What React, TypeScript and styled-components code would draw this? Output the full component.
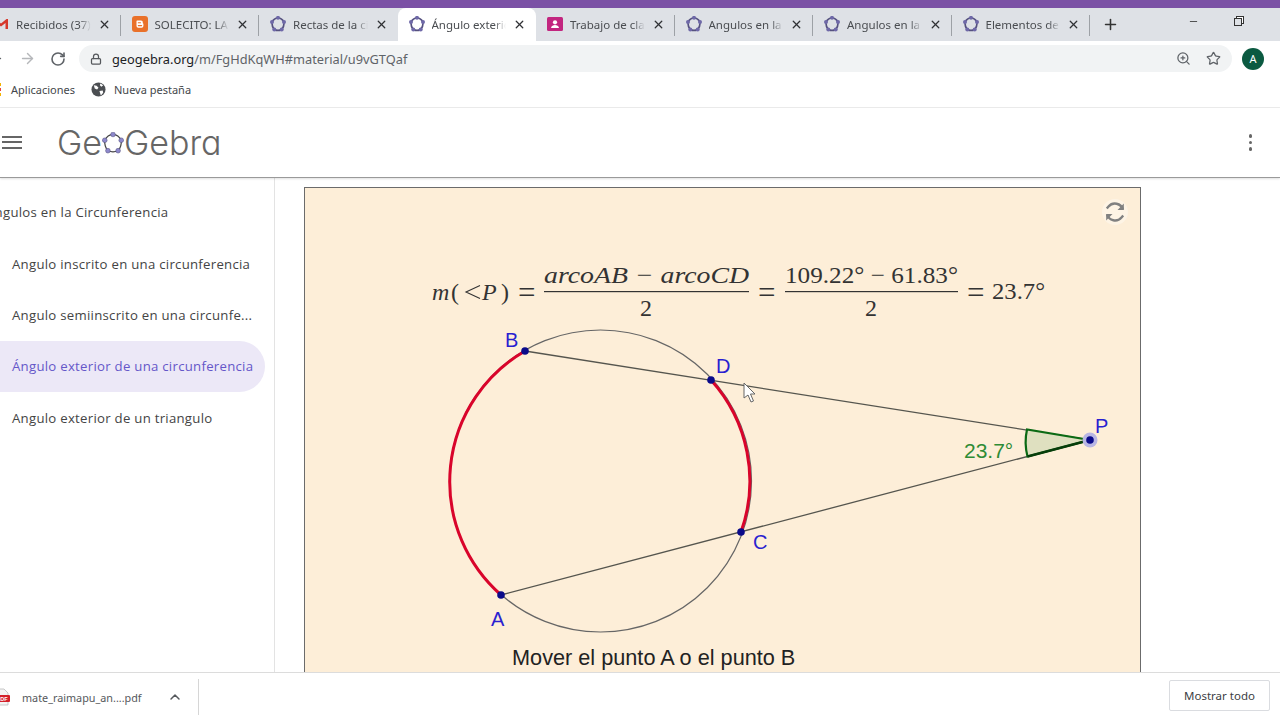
import React from 'react';
import styled, { createGlobalStyle } from 'styled-components';
import { ArrowLeft, ArrowRight, ChevronUp, Lock, Minus, Plus, RotateCw, Star, X, ZoomIn } from 'lucide-react';

const GlobalStyle = createGlobalStyle`
  html, body { margin: 0; padding: 0; background: #fff; overflow: hidden; }
  * { box-sizing: border-box; }
`;

const Page = styled.div`
  width: 1280px;
  height: 720px;
  display: flex;
  flex-direction: column;
  overflow: hidden;
  font-family: 'Noto Sans', 'Liberation Sans', sans-serif;
  color: #3c4043;
`;

const TitleStrip = styled.div`
  height: 8px;
  flex: none;
  background: #7b51a5;
`;

const TabStrip = styled.div`
  height: 33px;
  flex: none;
  display: flex;
  align-items: stretch;
  background: #dee1e6;
`;

const TabList = styled.div`
  display: flex;
  margin-left: -18px;
`;

const Tab = styled.div<{ $active?: boolean; $divider?: boolean }>`
  width: 138.5px;
  display: flex;
  align-items: center;
  gap: 7px;
  padding: 0 10px 1px 11px;
  position: relative;
  background: ${(p) => (p.$active ? '#fff' : 'transparent')};
  border-radius: ${(p) => (p.$active ? '8px 8px 0 0' : '0')};

  &:after {
    content: '';
    display: ${(p) => (p.$divider ? 'block' : 'none')};
    position: absolute;
    right: 0;
    top: 7px;
    bottom: 5px;
    width: 1px;
    background: #9da1a6;
  }
`;

const TabTitle = styled.span`
  flex: 1;
  min-width: 0;
  overflow: hidden;
  white-space: nowrap;
  font-size: 11.5px;
  color: #4a4d51;
  -webkit-mask-image: linear-gradient(to right, #000 84%, transparent 100%);
  mask-image: linear-gradient(to right, #000 84%, transparent 100%);
`;

const TabClose = styled(X)`
  flex: none;
  color: #2f3134;
`;

const NewTab = styled(Plus)`
  align-self: center;
  margin-left: 12px;
  color: #333;
`;

const WindowControls = styled.div`
  margin-left: auto;
  display: flex;
  align-items: center;
  gap: 35.5px;
  padding: 0 38px 6px 0;
  color: #444;
`;

const RestoreIcon = styled.div`
  width: 8px;
  height: 8px;
  border: 1px solid #333;
  position: relative;
  box-shadow: 2px -2px 0 -1px #fff, 2px -2px 0 0 #333;
`;

const Toolbar = styled.div`
  height: 33px;
  flex: none;
  display: flex;
  align-items: center;
  padding: 2px 15px 0 0;
  color: #5f6368;
`;

const NavIcons = styled.div`
  width: 79px;
  flex: none;
  display: flex;
  align-items: center;
  gap: 14.5px;
  margin-left: -13px;
`;

const Omnibox = styled.div`
  width: 1153px;
  height: 27px;
  flex: none;
  display: flex;
  align-items: center;
  background: #f1f3f4;
  border-radius: 14px;
  padding: 0 10px 0 11px;
  margin-left: 13px;
`;

const LockIcon = styled(Lock)`
  flex: none;
  margin-right: 10px;
  color: #55585c;
`;

const Url = styled.div`
  font-size: 12.8px;
  color: #5f6368;
  white-space: nowrap;

  b {
    font-weight: 400;
    color: #202124;
  }
`;

const OmniActions = styled.div`
  margin-left: auto;
  display: flex;
  align-items: center;
  gap: 15px;
  padding-right: 1px;
`;

const Avatar = styled.div`
  width: 22px;
  height: 22px;
  flex: none;
  margin-left: 10px;
  border-radius: 50%;
  background: #0b5a41;
  color: #fff;
  font-size: 11px;
  display: flex;
  align-items: center;
  justify-content: center;
`;

const BookmarkBar = styled.div`
  height: 34px;
  flex: none;
  display: flex;
  align-items: center;
  padding-bottom: 3px;
  border-bottom: 1px solid #ececec;
  font-size: 11px;
  color: #44474b;
`;

const Bookmark = styled.div<{ $gap: number; $offset?: number }>`
  display: flex;
  align-items: center;
  gap: ${(p) => p.$gap}px;
  margin-left: ${(p) => p.$offset ?? 0}px;
  margin-right: 16px;
`;

const AppHeader = styled.header`
  height: 70px;
  flex: none;
  display: flex;
  align-items: center;
  padding: 0 28px 0 2px;
  border-bottom: 1px solid #9a9a9a;
  box-shadow: 0 1px 2px rgba(0, 0, 0, 0.12);
  position: relative;
`;

const Hamburger = styled.div`
  width: 20px;
  height: 13px;
  flex: none;
  border-top: 2.5px solid #666;
  border-bottom: 2.5px solid #666;
  position: relative;

  &:after {
    content: '';
    position: absolute;
    left: 0;
    right: 0;
    top: 2.75px;
    height: 2.5px;
    background: #666;
  }
`;

const Logo = styled.div`
  display: flex;
  align-items: center;
  margin-left: 35px;
  font-family: 'Inter', sans-serif;
  font-weight: 300;
  font-size: 34px;
  font-feature-settings: 'cv11' 1;
  color: #666;
`;

const Kebab = styled.div`
  margin-left: auto;
  display: flex;
  flex-direction: column;
  gap: 3px;

  i {
    width: 3.5px;
    height: 3.5px;
    border-radius: 50%;
    background: #666;
  }
`;

const Main = styled.main`
  flex: 1;
  min-height: 0;
  display: flex;
  overflow: hidden;
`;

const Sidebar = styled.nav`
  width: 275px;
  flex: none;
  border-right: 1px solid #e3e3e3;
  padding: 20px 9px 0 0;
`;

const SidebarTitle = styled.div`
  font-family: 'Open Sans', sans-serif;
  font-size: 13.2px;
  font-weight: 500;
  letter-spacing: 0.27px;
  color: #444;
  height: 29px;
  line-height: 29px;
  margin-left: -14px;
  white-space: nowrap;
  margin-bottom: 11px;
`;

const SideItem = styled.div<{ $active?: boolean }>`
  height: 51.4px;
  display: flex;
  align-items: center;
  padding-left: 12px;
  font-family: 'Open Sans', sans-serif;
  font-size: 13.2px;
  font-weight: 500;
  letter-spacing: 0.27px;
  white-space: nowrap;
  color: ${(p) => (p.$active ? '#6557c9' : '#444')};
  background: ${(p) => (p.$active ? '#ece8f7' : 'transparent')};
  border-radius: 0 26px 26px 0;
`;

const Content = styled.section`
  flex: 1;
  padding: 9px 0 0 29px;
`;

const Applet = styled.div`
  width: 837px;
  height: 600px;
  border: 1px solid #6b6b6b;
  background: #fdeed8;
  position: relative;
`;

const AppletDrawing = styled.svg`
  display: block;
  width: 835px;
  height: 598px;
`;

const ResetButton = styled.div`
  position: absolute;
  top: 11px;
  right: 12px;
  width: 26px;
  height: 26px;
  display: flex;
  align-items: center;
  justify-content: center;
  border-radius: 50%;
  background: rgba(255, 255, 255, 0.35);
`;

const DownloadBar = styled.footer`
  height: 48px;
  flex: none;
  display: flex;
  align-items: center;
  background: #fff;
  border-top: 1px solid #dcdcdc;
  padding-right: 10px;
  position: relative;
`;

const DownloadItem = styled.div`
  width: 205px;
  height: 36px;
  display: flex;
  align-items: center;
  border-right: 1px solid #d6d6d6;
  padding-right: 15px;
  margin-left: -6px;
  margin-right: auto;
  margin-top: 1px;
  font-size: 10.8px;
  color: #55585c;
`;

const FileName = styled.span`
  margin-left: 12px;
  flex: 1;
`;

const ShowAll = styled.button`
  width: 101px;
  height: 31px;
  margin-bottom: 3px;
  background: #fff;
  border: 1px solid #dadce0;
  border-radius: 2px;
  font-family: 'Noto Sans', sans-serif;
  font-size: 11.5px;
  color: #3c4043;
  padding: 0;
`;

function GeoGebraIcon({ size = 16, dots = false }: { size?: number; dots?: boolean }) {
  const pts = [
    [8, 1.8],
    [14, 6],
    [11.7, 13.6],
    [4.3, 13.6],
    [2, 6],
  ];
  return (
    <svg width={size} height={size} viewBox="0 0 16 16" style={{ flex: 'none' }}>
      <path
        d="M8 1.8 Q12 2.2 14 6 Q14.4 10.4 11.7 13.6 Q8 15.2 4.3 13.6 Q1.6 10.4 2 6 Q4 2.2 8 1.8Z"
        fill="none"
        stroke={dots ? '#444' : '#55517f'}
        strokeWidth={dots ? 0.9 : 1.7}
      />
      {pts.map(([x, y], i) => (
        <circle key={i} cx={x} cy={y} r={dots ? 1.7 : 2} fill={dots ? '#8d88cc' : '#6f69a8'} stroke={dots ? '#55517f' : 'none'} strokeWidth="0.4" />
      ))}
    </svg>
  );
}

function GmailIcon() {
  return (
    <svg width="16" height="16" viewBox="0 0 16 16" style={{ flex: 'none' }}>
      <path d="M1 3v10h2.5V7L8 10.5 12.5 7v6H15V3h-1.5L8 7.5 2.5 3z" fill="#d6382c" />
    </svg>
  );
}

function BloggerIcon() {
  return (
    <svg width="16" height="16" viewBox="0 0 16 16" style={{ flex: 'none' }}>
      <rect x="0" y="0" width="16" height="16" rx="3" fill="#e9712a" />
      <path d="M5 4.5h4a1.8 1.8 0 0 1 1.8 2v.6c0 .4.4.5.6.6v2.2A1.8 1.8 0 0 1 9.6 11.7H6.3A1.8 1.8 0 0 1 4.5 9.9V5z" fill="#fff" />
      <path d="M6.3 6.7h2.2M6.3 9.6h3.3" stroke="#e9712a" strokeWidth="1.1" strokeLinecap="round" />
    </svg>
  );
}

function ClassroomIcon() {
  return (
    <svg width="16" height="16" viewBox="0 0 16 16" style={{ flex: 'none' }}>
      <rect x="0" y="1" width="16" height="14" rx="1.5" fill="#c2257f" />
      <circle cx="8" cy="6.3" r="2.1" fill="#fff" />
      <path d="M4 12c.5-2.2 2-3 4-3s3.5.8 4 3z" fill="#fff" />
    </svg>
  );
}

function GlobeIcon() {
  return (
    <svg width="15" height="15" viewBox="0 0 16 16" style={{ flex: 'none' }}>
      <circle cx="8" cy="8" r="7.5" fill="#4b4e52" />
      <path d="M3 3.5l3 .5 2 2-1.5 2L4 7zM9 9.5l3.5-.5.5 2.5-2.5 3zM10 1.5l3 2-2 1.5-1.5-1.5z" fill="#fff" />
    </svg>
  );
}

function AppsIcon() {
  const colors = ['#e8453c', '#f4b400', '#34a853', '#e8453c', '#f4b400', '#f4b400'];
  return (
    <svg width="14" height="14" viewBox="0 0 14 14" style={{ flex: 'none' }}>
      {colors.map((c, i) => (
        <rect key={i} x={i % 2 === 0 ? 0 : 4} y={Math.floor(i / 2) * 5 + 1} width="3" height="3" fill={c} />
      ))}
    </svg>
  );
}

function PdfIcon() {
  return (
    <svg width="16" height="18" viewBox="0 0 16 18" style={{ flex: 'none' }}>
      <path d="M2 1h8l4 4v12H2z" fill="#f4f4f4" stroke="#bbb" strokeWidth="0.8" />
      <rect x="0" y="7" width="16" height="7" rx="1" fill="#d3202a" />
      <text x="8" y="12.6" textAnchor="middle" fontSize="5.5" fontWeight="700" fontFamily="Liberation Sans" fill="#fff">
        PDF
      </text>
    </svg>
  );
}

const tabs = [
  { title: 'Recibidos (37) - alum', icon: <GmailIcon />, divider: true },
  { title: 'SOLECITO: LA CIRCUN', icon: <BloggerIcon />, divider: true },
  { title: 'Rectas de la circunfer', icon: <GeoGebraIcon /> },
  { title: 'Ángulo exterior de una', icon: <GeoGebraIcon />, active: true },
  { title: 'Trabajo de clase: Mat', icon: <ClassroomIcon />, divider: true },
  { title: 'Angulos en la Circunf', icon: <GeoGebraIcon />, divider: true },
  { title: 'Angulos en la Circunf', icon: <GeoGebraIcon />, divider: true },
  { title: 'Elementos de la Circu', icon: <GeoGebraIcon />, divider: true },
];

const lessons = [
  'Angulo inscrito en una circunferencia',
  'Angulo semiinscrito en una circunfe...',
  'Ángulo exterior de una circunferencia',
  'Angulo exterior de un triangulo',
];

const MATH = { fontFamily: "'Liberation Serif', serif", fontSize: 24, fill: '#333' };
const MATH_I = { ...MATH, fontStyle: 'italic' as const };
const EQ = { ...MATH, fontSize: 31 };
const LABEL = { fontFamily: "'Liberation Sans', sans-serif", fontSize: 20, fill: '#2a1fd0' };

// drawing uses page coordinates, the viewBox cuts it to the applet
function Construction() {
  return (
    <AppletDrawing viewBox="305 188 835 598">
      <text x="432" y="300" {...MATH_I}>m</text>
      <text x="451" y="300" {...MATH}>(</text>
      <path d="M480 285.5 L466 292 L480 298.5" fill="none" stroke="#333" strokeWidth="1.1" />
      <text x="482" y="300" {...MATH_I}>P</text>
      <text x="501" y="300" {...MATH}>)</text>
      <text x="518" y="303" {...EQ}>=</text>

      <text x="544" y="283" textLength="205" lengthAdjust="spacingAndGlyphs" {...MATH_I}>arcoAB − arcoCD</text>
      <rect x="544" y="291" width="205" height="1.2" fill="#333" />
      <text x="646" y="316" textAnchor="middle" {...MATH}>2</text>
      <text x="758" y="303" {...EQ}>=</text>
      <text x="785" y="283" textLength="173" lengthAdjust="spacingAndGlyphs" {...MATH}>109.22° − 61.83°</text>
      <rect x="785" y="291" width="173" height="1.2" fill="#333" />
      <text x="871" y="316" textAnchor="middle" {...MATH}>2</text>
      <text x="967" y="303" {...EQ}>=</text>
      <text x="992" y="299" textLength="53" lengthAdjust="spacingAndGlyphs" {...MATH}>23.7°</text>

      <circle cx="600.5" cy="481" r="151" fill="none" stroke="#666" strokeWidth="1.2" />
      <path d="M501 595 A151 151 0 0 1 525 351" fill="none" stroke="#d9042b" strokeWidth="3" />
      <path d="M711 380 A151 151 0 0 1 741 532" fill="none" stroke="#d9042b" strokeWidth="3" />
      <path d="M525 351 L1090 440 M501 595 L1090 440" stroke="#55554e" strokeWidth="1.3" />

      <path d="M1090 440 L1027 429.5 Q1024 443 1027.5 456.5 Z" fill="#dfe0c0" />
      <path d="M1090 440 L1027 429.5 Q1024 443 1027.5 456.5 Z" fill="none" stroke="#0b6a14" strokeWidth="2.2" />
      <path d="M1090 440 L1027.5 456.5" stroke="#063d0a" strokeWidth="2.5" />
      <text x="964" y="458" fontFamily="'Liberation Sans', sans-serif" fontSize="21" fill="#2e8b35">23.7°</text>

      <circle cx="1090" cy="440" r="7.5" fill="#b9b6e4" />
      <circle cx="1090" cy="440" r="3.8" fill="#0a0a8a" />
      <circle cx="525" cy="351" r="3.8" fill="#0a0a8a" />
      <circle cx="711" cy="380" r="3.8" fill="#0a0a8a" />
      <circle cx="741" cy="532" r="3.8" fill="#0a0a8a" />
      <circle cx="501" cy="595" r="3.8" fill="#0a0a8a" />

      <text x="505" y="347" {...LABEL}>B</text>
      <text x="716" y="373" {...LABEL}>D</text>
      <text x="753" y="549" {...LABEL}>C</text>
      <text x="491" y="626" {...LABEL}>A</text>
      <text x="1095" y="433" {...LABEL}>P</text>

      <path d="M744 383 L744 398 L748 395 L751 402 L753.5 401 L750.5 394 L755 394 Z" fill="#fff" stroke="#666" strokeWidth="1" />
      <text x="512" y="665" fontFamily="'Liberation Sans', sans-serif" fontSize="21.7" fill="#222">Mover el punto A o el punto B</text>
    </AppletDrawing>
  );
}

function App() {
  return (
    <>
      <GlobalStyle />
      <Page>
        <TitleStrip />
        <TabStrip>
          <TabList>
            {tabs.map((t, i) => (
              <Tab key={i} $active={t.active} $divider={t.divider}>
                {t.icon}
                <TabTitle>{t.title}</TabTitle>
                <TabClose size={13} strokeWidth={2.4} />
              </Tab>
            ))}
          </TabList>
          <NewTab size={17} strokeWidth={2.2} />
          <WindowControls>
            <Minus size={11} />
            <RestoreIcon />
          </WindowControls>
        </TabStrip>

        <Toolbar>
          <NavIcons>
            <ArrowLeft size={17} />
            <ArrowRight size={17} color="#b5b7ba" />
            <RotateCw size={16} strokeWidth={2.4} />
          </NavIcons>
          <Omnibox>
            <LockIcon size={12} strokeWidth={2.5} />
            <Url>
              <b>geogebra.org</b>/m/FgHdKqWH#material/u9vGTQaf
            </Url>
            <OmniActions>
              <ZoomIn size={15} />
              <Star size={15} />
            </OmniActions>
          </Omnibox>
          <Avatar>A</Avatar>
        </Toolbar>

        <BookmarkBar>
          <Bookmark $gap={3} $offset={-6}>
            <AppsIcon />
            Aplicaciones
          </Bookmark>
          <Bookmark $gap={8}>
            <GlobeIcon />
            Nueva pestaña
          </Bookmark>
        </BookmarkBar>

        <AppHeader>
          <Hamburger />
          <Logo>
            Ge
            <GeoGebraIcon size={22} dots />
            Gebra
          </Logo>
          <Kebab>
            <i />
            <i />
            <i />
          </Kebab>
        </AppHeader>

        <Main>
          <Sidebar>
            <SidebarTitle>Angulos en la Circunferencia</SidebarTitle>
            {lessons.map((l, i) => (
              <SideItem key={l} $active={i === 2}>
                {l}
              </SideItem>
            ))}
          </Sidebar>
          <Content>
            <Applet>
              <Construction />
              <ResetButton>
                <svg width="24" height="24" viewBox="0 0 24 24" fill="none" stroke="#808080" strokeWidth="2.4">
                  <path d="M20 9.5A8.5 8.5 0 0 0 5.5 6.5L3.8 8.5" />
                  <path d="M4 14.5A8.5 8.5 0 0 0 18.5 17.5L20.2 15.5" />
                  <path d="M20.8 3.5V10H14.5z" fill="#808080" stroke="none" />
                  <path d="M3.2 20.5V14H9.5z" fill="#808080" stroke="none" />
                </svg>
              </ResetButton>
            </Applet>
          </Content>
        </Main>

        <DownloadBar>
          <DownloadItem>
            <PdfIcon />
            <FileName>mate_raimapu_an....pdf</FileName>
            <ChevronUp size={16} strokeWidth={2.2} />
          </DownloadItem>
          <ShowAll>Mostrar todo</ShowAll>
        </DownloadBar>
      </Page>
    </>
  );
}

export default App;
